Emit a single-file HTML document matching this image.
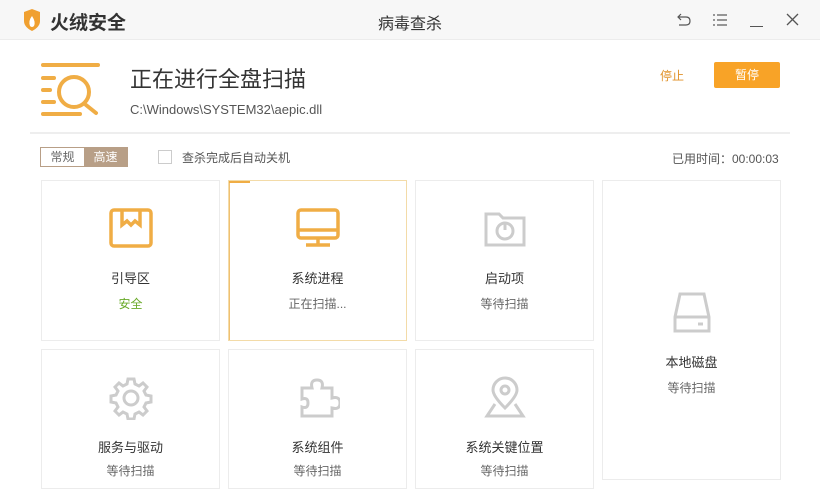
<!DOCTYPE html><html><head><meta charset="utf-8"><style>
*{margin:0;padding:0;box-sizing:border-box}
body{width:820px;height:469px;overflow:hidden;background:#fff;font-family:"Liberation Sans","Noto Sans CJK SC",sans-serif;position:relative;color:#333}
.top{position:absolute;left:0;top:0;width:820px;height:40px;background:#f7f7f7;border-bottom:1px solid #ececec}
.abs{position:absolute}
.card{position:absolute;border:1px solid #ececec;background:#fff;text-align:center}
.card .t{position:absolute;left:0;right:0;font-size:13px;color:#333}
.card .s{position:absolute;left:0;right:0;font-size:12px;color:#666}
.card svg{position:absolute;left:50%;transform:translateX(-50%)}
</style></head><body>
<div class="top"></div>
<svg class="abs" style="left:22px;top:9px" width="20" height="22" viewBox="0 0 20 22"><path d="M2 3 L10 0 L18 3 L18 12 Q18 18 10 22 Q2 18 2 12Z" fill="#f0a030"/><path d="M10 7 Q6 12 8 17 Q10 19 12 17 Q14 13 10 7Z" fill="#fff"/></svg>
<div class="abs" style="left:50px;top:8px;font-size:19px;font-weight:bold;color:#333">火绒安全</div>
<div class="abs" style="left:378px;top:10px;font-size:16px;color:#333">病毒查杀</div>
<svg class="abs" style="left:677px;top:13px" width="14" height="14" viewBox="0 0 14 14"><path d="M4 1 L1 4 L4 7 M1 4 H9 Q13 4 13 8 Q13 12 9 12 H2" stroke="#555" stroke-width="1.2" fill="none"/></svg>
<svg class="abs" style="left:713px;top:14px" width="14" height="12" viewBox="0 0 14 12"><g stroke="#555" stroke-width="1.2"><line x1="0" y1="1" x2="2" y2="1"/><line x1="4" y1="1" x2="14" y2="1"/><line x1="0" y1="6" x2="2" y2="6"/><line x1="4" y1="6" x2="14" y2="6"/><line x1="0" y1="11" x2="2" y2="11"/><line x1="4" y1="11" x2="14" y2="11"/></g></svg>
<div class="abs" style="left:750px;top:26px;width:13px;height:1px;background:#555"></div>
<svg class="abs" style="left:786px;top:13px" width="13" height="13" viewBox="0 0 13 13"><path d="M1 1 L12 12 M12 1 L1 12" stroke="#555" stroke-width="1.3"/></svg>
<svg class="abs" style="left:40px;top:62px" width="62" height="56" viewBox="0 0 62 56"><g stroke="#f0ad45" stroke-width="4" fill="none" stroke-linecap="round"><line x1="3" y1="3" x2="58" y2="3"/><line x1="3" y1="16" x2="14" y2="16"/><line x1="3" y1="28" x2="10" y2="28"/><line x1="3" y1="40" x2="14" y2="40"/><line x1="3" y1="52" x2="40" y2="52"/><circle cx="34" cy="30" r="15"/><line x1="46" y1="43" x2="56" y2="51"/></g></svg>
<div class="abs" style="left:130px;top:62px;font-size:22px;color:#333">正在进行全盘扫描</div>
<div class="abs" style="left:130px;top:102px;font-size:13px;color:#555">C:\Windows\SYSTEM32\aepic.dll</div>
<div class="abs" style="left:660px;top:67px;font-size:12px;color:#e0922a">停止</div>
<div class="abs" style="left:714px;top:62px;width:66px;height:26px;background:#f8a327;border-radius:2px;color:#fff;font-size:12px;text-align:center;line-height:26px">暂停</div>
<div class="abs" style="left:30px;top:132px;width:760px;height:2px;background:#eee"></div>
<div class="abs" style="left:40px;top:147px;width:88px;height:20px;border:1px solid #b89f87;font-size:12px;line-height:18px"><span style="display:inline-block;width:43px;text-align:center;color:#666">常规</span><span style="display:inline-block;width:43px;background:#b89f87;color:#fff;text-align:center">高速</span></div>
<div class="abs" style="left:158px;top:150px;width:14px;height:14px;border:1px solid #ccc"></div>
<div class="abs" style="left:182px;top:149px;font-size:12px;color:#555">查杀完成后自动关机</div>
<div class="abs" style="left:672px;top:150px;font-size:12px;color:#555">已用时间：00:00:03</div>

<div class="card" style="left:41px;top:180px;width:179px;height:161px">
<svg style="top:27px" width="44" height="40" viewBox="0 0 44 40"><g stroke="#f0ad45" stroke-width="3.5" fill="none"><rect x="2" y="2" width="40" height="36" rx="3"/><path d="M13 2 V17 L18 13 L22 17 L26 13 L31 17 V2"/></g></svg>
<div class="t" style="top:87px">引导区</div><div class="s" style="top:114px;color:#6aaa2a">安全</div></div>
<div class="card" style="left:228px;top:180px;width:179px;height:161px;border-color:#f3dba8;box-shadow:inset 1px 0 0 #f0c070"><div class="abs" style="left:0;top:0;width:21px;height:2px;background:#f0ad45"></div>
<svg style="top:27px" width="44" height="40" viewBox="0 0 44 40"><g stroke="#f0ad45" stroke-width="3.5" fill="none"><rect x="2" y="2" width="40" height="28" rx="3"/><line x1="2" y1="22" x2="42" y2="22"/><line x1="22" y1="30" x2="22" y2="37"/><line x1="10" y1="37" x2="34" y2="37"/></g></svg>
<div class="t" style="top:87px">系统进程</div><div class="s" style="top:114px">正在扫描...</div></div>
<div class="card" style="left:415px;top:180px;width:179px;height:161px">
<svg style="top:27px" width="44" height="40" viewBox="0 0 44 40"><g stroke="#ccc" stroke-width="3" fill="none"><path d="M3 6 H16 L20 10 H41 V37 H3Z"/><circle cx="22" cy="23" r="8"/><line x1="22" y1="14" x2="22" y2="22"/></g></svg>
<div class="t" style="top:87px">启动项</div><div class="s" style="top:114px">等待扫描</div></div>
<div class="card" style="left:602px;top:180px;width:179px;height:300px">
<svg style="top:110px" width="40" height="44" viewBox="0 0 40 44"><g stroke="#ccc" stroke-width="3" fill="none"><path d="M8 3 H32 L37 26 V40 H3 V26Z"/><line x1="3" y1="26" x2="37" y2="26"/><line x1="26" y1="33" x2="31" y2="33"/></g></svg>
<div class="t" style="top:171px">本地磁盘</div><div class="s" style="top:198px">等待扫描</div></div>
<div class="card" style="left:41px;top:349px;width:179px;height:140px">
<svg style="top:26px" width="44" height="44" viewBox="0 0 44 44"><g stroke="#ccc" stroke-width="3" fill="none"><circle cx="22" cy="22" r="7"/><path d="M19 3h6l1 5 4 2 4-3 4 4-3 4 2 4 5 1v6l-5 1-2 4 3 4-4 4-4-3-4 2-1 5h-6l-1-5-4-2-4 3-4-4 3-4-2-4-5-1v-6l5-1 2-4-3-4 4-4 4 3 4-2z"/></g></svg>
<div class="t" style="top:87px">服务与驱动</div><div class="s" style="top:112px">等待扫描</div></div>
<div class="card" style="left:228px;top:349px;width:179px;height:140px">
<svg style="top:26px" width="44" height="44" viewBox="0 0 44 44"><path d="M6 12 H16 Q14 4 21 4 Q28 4 26 12 H36 V22 Q44 20 44 27 Q44 34 36 32 V40 H6 V31 Q12 33 12 27 Q12 21 6 23Z" stroke="#ccc" stroke-width="3" fill="none"/></svg>
<div class="t" style="top:87px">系统组件</div><div class="s" style="top:112px">等待扫描</div></div>
<div class="card" style="left:415px;top:349px;width:179px;height:140px">
<svg style="top:26px" width="44" height="44" viewBox="0 0 44 44"><g stroke="#ccc" stroke-width="3" fill="none"><path d="M22 32 Q10 20 10 14 A12 12 0 0 1 34 14 Q34 20 22 32Z"/><circle cx="22" cy="14" r="4"/><path d="M12 28 L4 40 H40 L32 28"/></g></svg>
<div class="t" style="top:87px">系统关键位置</div><div class="s" style="top:112px">等待扫描</div></div>
</body></html>
